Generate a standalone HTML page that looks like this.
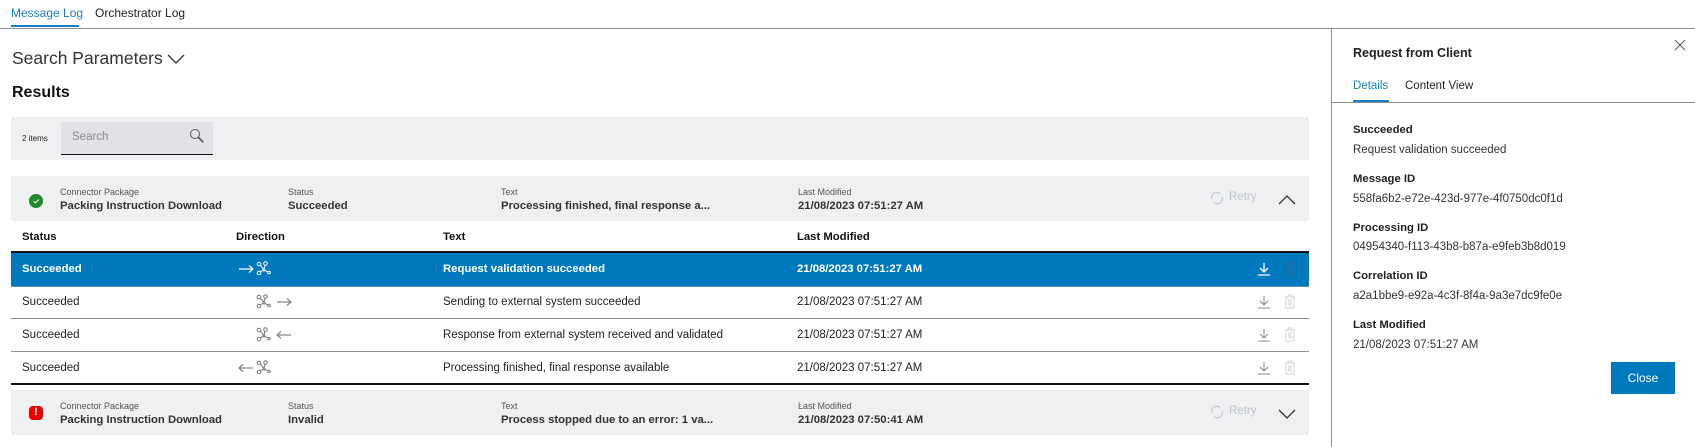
<!DOCTYPE html>
<html><head><meta charset="utf-8"><style>
*{margin:0;padding:0;box-sizing:border-box}
body{width:1695px;height:447px;overflow:hidden;background:#fff;font-family:"Liberation Sans",sans-serif;color:#222;font-size:11.5px;position:relative}
.a{position:absolute;white-space:nowrap}
.s{font-size:9px;color:#555}
.b{font-weight:bold;font-size:11.3px;color:#333}
.g{background:#eff0f2}
.ln{position:absolute;left:11px;width:1298px;height:1px;background:#8a9097}
</style></head><body>
<svg width="0" height="0" style="position:absolute"><defs>
<g id="net" fill="none" stroke-width="1"><circle cx="3" cy="3" r="1.8"/><circle cx="9.5" cy="2.5" r="1.8"/><circle cx="3" cy="12" r="1.8"/><circle cx="13" cy="11.5" r="1.3"/><path d="M4.4 4.2L7.5 8M9 4.3L8 8M4.4 10.8L7 9.3M8.8 9.3L11.8 11"/><circle cx="8" cy="9" r="1"/></g>
<path id="ar" d="M1 6h14M11 2.5l4 3.5-4 3.5" fill="none" stroke-width="1.2"/>
<path id="al" d="M1 6h14M5 2.5L1 6l4 3.5" fill="none" stroke-width="1.2"/>
</defs></svg>
<div class="a" style="left:11px;top:6px;color:#1a7fc1;font-size:12px">Message Log</div>
<div class="a" style="left:11px;top:25px;width:68px;height:2px;background:#1a7fc1"></div>
<div class="a" style="left:95px;top:6px;font-size:12px">Orchestrator Log</div>
<div class="a" style="left:0;top:28px;width:1695px;height:1px;background:#8a9097"></div>
<div class="a" style="left:1331px;top:28px;width:1px;height:419px;background:#8a9097"></div>

<div class="a" style="left:12px;top:48px;font-size:17.5px;color:#333">Search Parameters</div>
<svg class="a" style="left:167px;top:53px" width="18" height="12"><path d="M1 2l8 8 8-8" fill="none" stroke="#333" stroke-width="1.3"/></svg>
<div class="a" style="left:12px;top:84px;font-size:16px;font-weight:bold;color:#111">Results</div>

<div class="a g" style="left:11px;top:117px;width:1298px;height:43px"></div>
<div class="a" style="left:22px;top:134px;font-size:8px">2 items</div>
<div class="a" style="left:61px;top:122px;width:152px;height:33px;background:#e0e2e5;border-bottom:1px solid #111"></div>
<div class="a" style="left:72px;top:131px;color:#888;font-size:11.5px">Search</div>
<svg class="a" style="left:189px;top:128px" width="16" height="16"><circle cx="6" cy="6" r="4.5" fill="none" stroke="#555" stroke-width="1"/><path d="M9.3 9.3l5 5" stroke="#555" stroke-width="1.6"/></svg>

<!-- group 1 -->
<div class="a g" style="left:11px;top:176px;width:1298px;height:45px"></div>
<div class="a" style="left:29px;top:194px;width:14px;height:14px;border-radius:50%;background:#1c8a2e"></div>
<svg class="a" style="left:29px;top:194px" width="14" height="14"><path d="M4.5 7.2l1.8 1.8 3.5-3.5" fill="none" stroke="#fff" stroke-width="1"/></svg>
<div class="a s" style="left:60px;top:187px">Connector Package</div>
<div class="a b" style="left:60px;top:200px">Packing Instruction Download</div>
<div class="a s" style="left:288px;top:187px">Status</div>
<div class="a b" style="left:288px;top:200px">Succeeded</div>
<div class="a s" style="left:501px;top:187px">Text</div>
<div class="a b" style="left:501px;top:200px">Processing finished, final response a...</div>
<div class="a s" style="left:798px;top:187px">Last Modified</div>
<div class="a b" style="left:798px;top:200px">21/08/2023 07:51:27 AM</div>
<svg class="a" style="left:1209px;top:190px" width="16" height="16"><path d="M3 9a5 5 0 0 1 8-5.5M13 7a5 5 0 0 1-8 5.5" fill="none" stroke="#c6c9cd" stroke-width="1.2"/></svg>
<div class="a" style="left:1229px;top:191px;color:#c0c3c7;font-size:11.5px">Retry</div>
<svg class="a" style="left:1277px;top:194px" width="20" height="12"><path d="M2 10l8-8 8 8" fill="none" stroke="#333" stroke-width="1.3"/></svg>

<!-- table -->
<div class="a b" style="left:22px;top:231px;color:#111">Status</div>
<div class="a b" style="left:236px;top:231px;color:#111">Direction</div>
<div class="a b" style="left:443px;top:231px;color:#111">Text</div>
<div class="a b" style="left:797px;top:231px;color:#111">Last Modified</div>
<div class="a" style="left:11px;top:251px;width:1298px;height:2px;background:#111"></div>
<div class="a" style="left:11px;top:253px;width:1298px;height:33px;background:#0078be"></div>
<div class="ln" style="top:286px;background:#5e95c0"></div>
<div class="ln" style="top:318px"></div>
<div class="ln" style="top:351px"></div>
<div class="a" style="left:11px;top:383px;width:1298px;height:2px;background:#111"></div>

<div class="a" style="left:22px;top:263px;color:#fff;font-weight:bold;font-size:11.3px">Succeeded</div>
<svg class="a" style="left:238px;top:263px" width="16" height="12" stroke="#fff"><use href="#ar"/></svg>
<svg class="a" style="left:256px;top:261px" width="16" height="16" stroke="#fff"><use href="#net"/></svg>
<div class="a" style="left:443px;top:263px;color:#fff;font-weight:bold;font-size:11.3px">Request validation succeeded</div>
<div class="a" style="left:797px;top:263px;color:#fff;font-weight:bold;font-size:11.3px">21/08/2023 07:51:27 AM</div>
<svg class="a" style="left:1257px;top:262px" width="14" height="14"><path d="M7 1v9M3 6l4 4 4-4M1 13h12" fill="none" stroke="#fff" stroke-width="1.3"/></svg>
<svg class="a" style="left:1284px;top:261px" width="12" height="15"><path d="M1 3h10M4 3V1h4v2M2 3v11h8V3M5 5v7M7 5v7" fill="none" stroke="#2a6fa0" stroke-width="1"/></svg>

<div class="a" style="left:22px;top:296px">Succeeded</div>
<svg class="a" style="left:256px;top:294px" width="16" height="16" stroke="#777"><use href="#net"/></svg>
<svg class="a" style="left:276px;top:296px" width="16" height="12" stroke="#888"><use href="#ar"/></svg>
<div class="a" style="left:443px;top:296px">Sending to external system succeeded</div>
<div class="a" style="left:797px;top:296px">21/08/2023 07:51:27 AM</div>

<div class="a" style="left:22px;top:329px">Succeeded</div>
<svg class="a" style="left:256px;top:327px" width="16" height="16" stroke="#777"><use href="#net"/></svg>
<svg class="a" style="left:276px;top:329px" width="16" height="12" stroke="#888"><use href="#al"/></svg>
<div class="a" style="left:443px;top:329px">Response from external system received and validated</div>
<div class="a" style="left:797px;top:329px">21/08/2023 07:51:27 AM</div>

<div class="a" style="left:22px;top:362px">Succeeded</div>
<svg class="a" style="left:238px;top:362px" width="16" height="12" stroke="#888"><use href="#al"/></svg>
<svg class="a" style="left:256px;top:360px" width="16" height="16" stroke="#777"><use href="#net"/></svg>
<div class="a" style="left:443px;top:362px">Processing finished, final response available</div>
<div class="a" style="left:797px;top:362px">21/08/2023 07:51:27 AM</div>

<svg class="a" style="left:1257px;top:295px" width="14" height="14"><path d="M7 1v9M3 6l4 4 4-4M1 13h12" fill="none" stroke="#888" stroke-width="1"/></svg>
<svg class="a" style="left:1284px;top:294px" width="12" height="15"><path d="M1 3h10M4 3V1h4v2M2 3v11h8V3M5 5v7M7 5v7" fill="none" stroke="#d0d3d6" stroke-width="1"/></svg>
<svg class="a" style="left:1257px;top:328px" width="14" height="14"><path d="M7 1v9M3 6l4 4 4-4M1 13h12" fill="none" stroke="#888" stroke-width="1"/></svg>
<svg class="a" style="left:1284px;top:327px" width="12" height="15"><path d="M1 3h10M4 3V1h4v2M2 3v11h8V3M5 5v7M7 5v7" fill="none" stroke="#d0d3d6" stroke-width="1"/></svg>
<svg class="a" style="left:1257px;top:361px" width="14" height="14"><path d="M7 1v9M3 6l4 4 4-4M1 13h12" fill="none" stroke="#888" stroke-width="1"/></svg>
<svg class="a" style="left:1284px;top:360px" width="12" height="15"><path d="M1 3h10M4 3V1h4v2M2 3v11h8V3M5 5v7M7 5v7" fill="none" stroke="#d0d3d6" stroke-width="1"/></svg>

<!-- group 2 -->
<div class="a g" style="left:11px;top:390px;width:1298px;height:45px"></div>
<div class="a" style="left:29px;top:406px;width:14px;height:14px;border-radius:4px;background:#e00"></div>
<div class="a" style="left:29px;top:406px;width:14px;text-align:center;color:#fff;font-weight:bold;font-size:11px">!</div>
<div class="a s" style="left:60px;top:401px">Connector Package</div>
<div class="a b" style="left:60px;top:414px">Packing Instruction Download</div>
<div class="a s" style="left:288px;top:401px">Status</div>
<div class="a b" style="left:288px;top:414px">Invalid</div>
<div class="a s" style="left:501px;top:401px">Text</div>
<div class="a b" style="left:501px;top:414px">Process stopped due to an error: 1 va...</div>
<div class="a s" style="left:798px;top:401px">Last Modified</div>
<div class="a b" style="left:798px;top:414px">21/08/2023 07:50:41 AM</div>
<svg class="a" style="left:1209px;top:404px" width="16" height="16"><path d="M3 9a5 5 0 0 1 8-5.5M13 7a5 5 0 0 1-8 5.5" fill="none" stroke="#c6c9cd" stroke-width="1.2"/></svg>
<div class="a" style="left:1229px;top:405px;color:#c0c3c7;font-size:11.5px">Retry</div>
<svg class="a" style="left:1277px;top:408px" width="20" height="12"><path d="M2 2l8 8 8-8" fill="none" stroke="#333" stroke-width="1.3"/></svg>

<!-- right panel -->
<div class="a" style="left:1353px;top:46px;font-weight:bold;font-size:12.5px;color:#222">Request from Client</div>
<svg class="a" style="left:1674px;top:39px" width="12" height="12"><path d="M1 1l10 10M11 1L1 11" stroke="#555" stroke-width="1"/></svg>
<div class="a" style="left:1353px;top:80px;color:#1a7fc1">Details</div>
<div class="a" style="left:1353px;top:100px;width:36px;height:2px;background:#1a7fc1"></div>
<div class="a" style="left:1405px;top:80px">Content View</div>
<div class="a" style="left:1331px;top:102px;width:364px;height:1px;background:#8a9097"></div>

<div class="a" style="left:1353px;top:124px;font-weight:bold;font-size:11.3px">Succeeded</div>
<div class="a" style="left:1353px;top:144px;color:#333">Request validation succeeded</div>
<div class="a" style="left:1353px;top:173px;font-weight:bold;font-size:11.3px">Message ID</div>
<div class="a" style="left:1353px;top:193px;color:#333">558fa6b2-e72e-423d-977e-4f0750dc0f1d</div>
<div class="a" style="left:1353px;top:222px;font-weight:bold;font-size:11.3px">Processing ID</div>
<div class="a" style="left:1353px;top:241px;color:#333">04954340-f113-43b8-b87a-e9feb3b8d019</div>
<div class="a" style="left:1353px;top:270px;font-weight:bold;font-size:11.3px">Correlation ID</div>
<div class="a" style="left:1353px;top:290px;color:#333">a2a1bbe9-e92a-4c3f-8f4a-9a3e7dc9fe0e</div>
<div class="a" style="left:1353px;top:319px;font-weight:bold;font-size:11.3px">Last Modified</div>
<div class="a" style="left:1353px;top:339px;color:#333">21/08/2023 07:51:27 AM</div>

<div class="a" style="left:1611px;top:362px;width:64px;height:32px;background:#0078be;color:#fff;text-align:center;line-height:32px;font-size:12px">Close</div>
</body></html>
